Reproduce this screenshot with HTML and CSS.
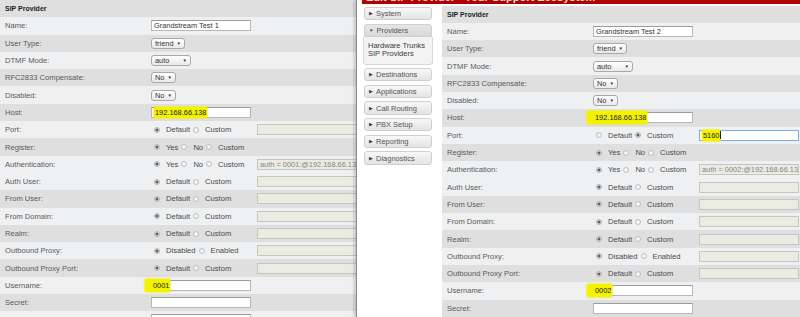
FILE: index.html
```html
<!DOCTYPE html>
<html lang="en">
<head>
  <meta charset="UTF-8">
  <title>SIP Provider</title>
  <link rel="stylesheet" href="styles.css">
</head>
<body>

<div class="screen">
  <!-- first window: provider 1 -->
  <div class="win-left">
    <div class="form">
      <div class="row head"><span class="label">SIP Provider</span></div>
      <div class="row"><span class="label">Name:</span><div class="field">Grandstream Test 1</div></div>
      <div class="row gray"><span class="label">User Type:</span><div class="select w-friend">friend<span class="arrow">&#9660;</span></div></div>
      <div class="row"><span class="label">DTMF Mode:</span><div class="select w-auto">auto<span class="arrow">&#9660;</span></div></div>
      <div class="row gray"><span class="label">RFC2833 Compensate:</span><div class="select w-no">No<span class="arrow">&#9660;</span></div></div>
      <div class="row"><span class="label">Disabled:</span><div class="select w-no">No<span class="arrow">&#9660;</span></div></div>
      <div class="row gray"><span class="label">Host:</span><div class="field"><span class="mark">192.168.66.138</span></div></div>
      <div class="row"><span class="label">Port:</span>
        <div class="opts"><span class="radio on"></span><span class="opt">Default</span><span class="radio"></span><span class="opt">Custom</span></div>
        <div class="field off"></div></div>
      <div class="row gray"><span class="label">Register:</span>
        <div class="opts"><span class="radio on"></span><span class="opt">Yes</span><span class="radio"></span><span class="opt">No</span><span class="radio"></span><span class="opt">Custom</span></div></div>
      <div class="row"><span class="label">Authentication:</span>
        <div class="opts"><span class="radio on"></span><span class="opt">Yes</span><span class="radio"></span><span class="opt">No</span><span class="radio"></span><span class="opt">Custom</span></div>
        <div class="field off">auth = 0001:@192.168.66.138</div></div>
      <div class="row"><span class="label">Auth User:</span>
        <div class="opts"><span class="radio on"></span><span class="opt">Default</span><span class="radio"></span><span class="opt">Custom</span></div>
        <div class="field off"></div></div>
      <div class="row gray"><span class="label">From User:</span>
        <div class="opts"><span class="radio on"></span><span class="opt">Default</span><span class="radio"></span><span class="opt">Custom</span></div>
        <div class="field off"></div></div>
      <div class="row"><span class="label">From Domain:</span>
        <div class="opts"><span class="radio on"></span><span class="opt">Default</span><span class="radio"></span><span class="opt">Custom</span></div>
        <div class="field off"></div></div>
      <div class="row gray"><span class="label">Realm:</span>
        <div class="opts"><span class="radio on"></span><span class="opt">Default</span><span class="radio"></span><span class="opt">Custom</span></div>
        <div class="field off"></div></div>
      <div class="row"><span class="label">Outbound Proxy:</span>
        <div class="opts"><span class="radio on"></span><span class="opt">Disabled</span><span class="radio"></span><span class="opt">Enabled</span></div>
        <div class="field off"></div></div>
      <div class="row gray"><span class="label">Outbound Proxy Port:</span>
        <div class="opts"><span class="radio on"></span><span class="opt">Default</span><span class="radio"></span><span class="opt">Custom</span></div>
        <div class="field off"></div></div>
      <div class="row"><span class="label">Username:</span><div class="field"><span class="mark wide">0001</span></div></div>
      <div class="row gray"><span class="label">Secret:</span><div class="field"></div></div>
      <div class="row"><span class="label">Inbound CallerID:</span><div class="field"></div></div>
    </div>
  </div>

  <!-- second window: provider 2 with menu -->
  <div class="win-right">
    <div class="titlebar"><span>Edit SIP Provider - Your Support Ecosystem</span></div>
    <div class="body">
      <div class="menu">
        <div class="menu-btn"><span class="tri">&#9654;</span>System</div>
        <div class="menu-btn open"><span class="tri">&#9660;</span>Providers</div>
        <div class="submenu">
          <div>Hardware Trunks</div>
          <div>SIP Providers</div>
        </div>
        <div class="menu-btn"><span class="tri">&#9654;</span>Destinations</div>
        <div class="menu-btn"><span class="tri">&#9654;</span>Applications</div>
        <div class="menu-btn"><span class="tri">&#9654;</span>Call Routing</div>
        <div class="menu-btn"><span class="tri">&#9654;</span>PBX Setup</div>
        <div class="menu-btn"><span class="tri">&#9654;</span>Reporting</div>
        <div class="menu-btn"><span class="tri">&#9654;</span>Diagnostics</div>
      </div>

      <div class="form form-right">
        <div class="row head"><span class="label">SIP Provider</span></div>
        <div class="row"><span class="label">Name:</span><div class="field">Grandstream Test 2</div></div>
        <div class="row gray"><span class="label">User Type:</span><div class="select w-friend">friend<span class="arrow">&#9660;</span></div></div>
        <div class="row"><span class="label">DTMF Mode:</span><div class="select w-auto">auto<span class="arrow">&#9660;</span></div></div>
        <div class="row gray"><span class="label">RFC2833 Compensate:</span><div class="select w-no">No<span class="arrow">&#9660;</span></div></div>
        <div class="row"><span class="label">Disabled:</span><div class="select w-no">No<span class="arrow">&#9660;</span></div></div>
        <div class="row gray"><span class="label">Host:</span><div class="field"><span class="mark wide">192.168.66.138</span></div></div>
        <div class="row"><span class="label">Port:</span>
          <div class="opts"><span class="radio"></span><span class="opt">Default</span><span class="radio on"></span><span class="opt">Custom</span></div>
          <div class="field focus"><span class="mark">5160</span><span class="caret"></span></div></div>
        <div class="row gray"><span class="label">Register:</span>
          <div class="opts"><span class="radio on"></span><span class="opt">Yes</span><span class="radio"></span><span class="opt">No</span><span class="radio"></span><span class="opt">Custom</span></div></div>
        <div class="row"><span class="label">Authentication:</span>
          <div class="opts"><span class="radio on"></span><span class="opt">Yes</span><span class="radio"></span><span class="opt">No</span><span class="radio"></span><span class="opt">Custom</span></div>
          <div class="field off">auth = 0002:@192.168.66.138</div></div>
        <div class="row"><span class="label">Auth User:</span>
          <div class="opts"><span class="radio on"></span><span class="opt">Default</span><span class="radio"></span><span class="opt">Custom</span></div>
          <div class="field off"></div></div>
        <div class="row gray"><span class="label">From User:</span>
          <div class="opts"><span class="radio on"></span><span class="opt">Default</span><span class="radio"></span><span class="opt">Custom</span></div>
          <div class="field off"></div></div>
        <div class="row"><span class="label">From Domain:</span>
          <div class="opts"><span class="radio on"></span><span class="opt">Default</span><span class="radio"></span><span class="opt">Custom</span></div>
          <div class="field off"></div></div>
        <div class="row gray"><span class="label">Realm:</span>
          <div class="opts"><span class="radio on"></span><span class="opt">Default</span><span class="radio"></span><span class="opt">Custom</span></div>
          <div class="field off"></div></div>
        <div class="row"><span class="label">Outbound Proxy:</span>
          <div class="opts"><span class="radio on"></span><span class="opt">Disabled</span><span class="radio"></span><span class="opt">Enabled</span></div>
          <div class="field off"></div></div>
        <div class="row gray"><span class="label">Outbound Proxy Port:</span>
          <div class="opts"><span class="radio on"></span><span class="opt">Default</span><span class="radio"></span><span class="opt">Custom</span></div>
          <div class="field off"></div></div>
        <div class="row"><span class="label">Username:</span><div class="field"><span class="mark wide">0002</span></div></div>
        <div class="row gray"><span class="label">Secret:</span><div class="field"></div></div>
      </div>
    </div>
  </div>
</div>

</body>
</html>
```

FILE: styles.css
```css
body {
  margin: 0;
  font-family: "Liberation Sans", Arial, sans-serif;
  background-color: #ffffff;
}

.screen {
  display: flex;
  width: 800px;
  height: 317px;
  overflow: hidden;
}

/* left window */
.win-left {
  flex: none;
  width: 356px;
  overflow: hidden;
  padding-top: 0;
}

.form {
  width: 356px;
}

.row {
  display: grid;
  grid-template-columns: 150px 106px 1fr;
  align-items: center;
  height: 17.3px;
  background-color: #eef0f1;
  font-size: 7.6px;
  color: #5a5a5a;
}

.row.gray,
.row.head {
  background-color: #dfdfdf;
}

.row.head .label {
  font-weight: bold;
  color: #222;
  font-size: 7px;
}

.label {
  padding-left: 5px;
  white-space: nowrap;
}

/* text inputs */
.field {
  box-sizing: border-box;
  width: 100px;
  height: 11px;
  margin-left: 1px;
  padding: 0 2px;
  border: 1px solid #b8b8b8;
  border-top-color: #9c9c9c;
  background-color: #fff;
  color: #333;
  font-size: 7.4px;
  line-height: 9px;
  white-space: nowrap;
  overflow: visible;
  display: flex;
  align-items: center;
}

.field.off {
  background-color: #ebebe4;
  border-color: #c6c6bd;
  color: #858585;
  overflow: hidden;
}

.field.focus {
  border-color: #7aaee0;
}

.caret {
  display: inline-block;
  width: 1px;
  height: 8px;
  background-color: #222;
}

/* yellow marker strokes */
.mark {
  display: inline-block;
  background-color: #f3f300;
  line-height: 9px;
  padding: 1px 1px;
  margin: -1px 0;
  border-radius: 2px;
  box-shadow: 0 0 1px 1px rgba(243, 243, 0, 0.6);
  color: #222;
}

.mark.wide {
  padding-left: 8px;
  margin-left: -9px;
  padding-top: 2px;
  padding-bottom: 2px;
}

/* selects */
.select {
  box-sizing: border-box;
  display: flex;
  align-items: center;
  height: 11px;
  margin-left: 1px;
  padding: 0 3px;
  border: 1px solid #a8a8a8;
  border-radius: 3px;
  background: linear-gradient(#ffffff, #e9e9e9);
  color: #333;
  font-size: 7.4px;
}

.select .arrow {
  margin-left: auto;
  font-size: 4.5px;
  color: #333;
}

.w-friend { width: 34px; }
.w-auto { width: 40px; }
.w-no { width: 25px; }

/* radio groups */
.opts {
  display: flex;
  align-items: center;
  padding-left: 4px;
  white-space: nowrap;
}

.radio {
  box-sizing: border-box;
  width: 6px;
  height: 6px;
  margin-right: 6px;
  border: 1px solid #c2c2c2;
  border-radius: 50%;
  background: radial-gradient(circle, #ffffff, #e4e4e4);
  flex: none;
}

.radio.on {
  background: radial-gradient(circle, #5e5e5e 0, #5e5e5e 1.2px, #e6e6e6 1.8px);
  border-color: #b4b4b4;
}

.opt {
  margin-right: 3px;
  color: #4a4a4a;
  font-size: 7.6px;
}

/* right window */
.win-right {
  flex: 1;
  position: relative;
  border-left: 1px solid #8c8c8c;
  box-shadow: -2px 0 3px rgba(0, 0, 0, 0.18);
  background-color: #fff;
  overflow: hidden;
}

.titlebar {
  height: 4px;
  margin-left: 5px;
  background-color: #b00000;
  overflow: hidden;
  color: #f4dede;
  font-size: 11px;
  font-weight: bold;
}

.titlebar span {
  display: block;
  margin-top: -9px;
  padding-left: 4px;
  white-space: nowrap;
}

.body {
  display: flex;
  align-items: flex-start;
  padding-top: 1.5px;
}

.menu {
  flex: none;
  width: 70px;
  margin-left: 6px;
  padding-top: 1.5px;
  display: flex;
  flex-direction: column;
}

.menu-btn {
  box-sizing: border-box;
  height: 13.3px;
  margin: 0 1px 3.4px;
  padding-left: 4px;
  display: flex;
  align-items: center;
  border: 1px solid #d0d0d0;
  border-radius: 3px;
  background: linear-gradient(#f8f8f8, #e3e3e3);
  color: #555;
  font-size: 7.5px;
  white-space: nowrap;
}

.menu-btn .tri {
  font-size: 4.5px;
  margin-right: 3px;
  color: #444;
}

.menu-btn.open {
  margin-bottom: 0;
  border-radius: 3px 3px 0 0;
  background: linear-gradient(#e6e6e6, #d8d8d8);
}

.submenu {
  box-sizing: border-box;
  height: 28px;
  margin-bottom: 3px;
  padding: 5px 4px 0;
  border: 1px solid #d8d8d8;
  border-top: none;
  border-radius: 0 0 3px 3px;
  background-color: #f3f3f3;
  color: #3a3a3a;
  font-size: 7.5px;
  line-height: 8.5px;
}

.form-right {
  flex: none;
  width: 360px;
  margin-left: 9px;
}
```
